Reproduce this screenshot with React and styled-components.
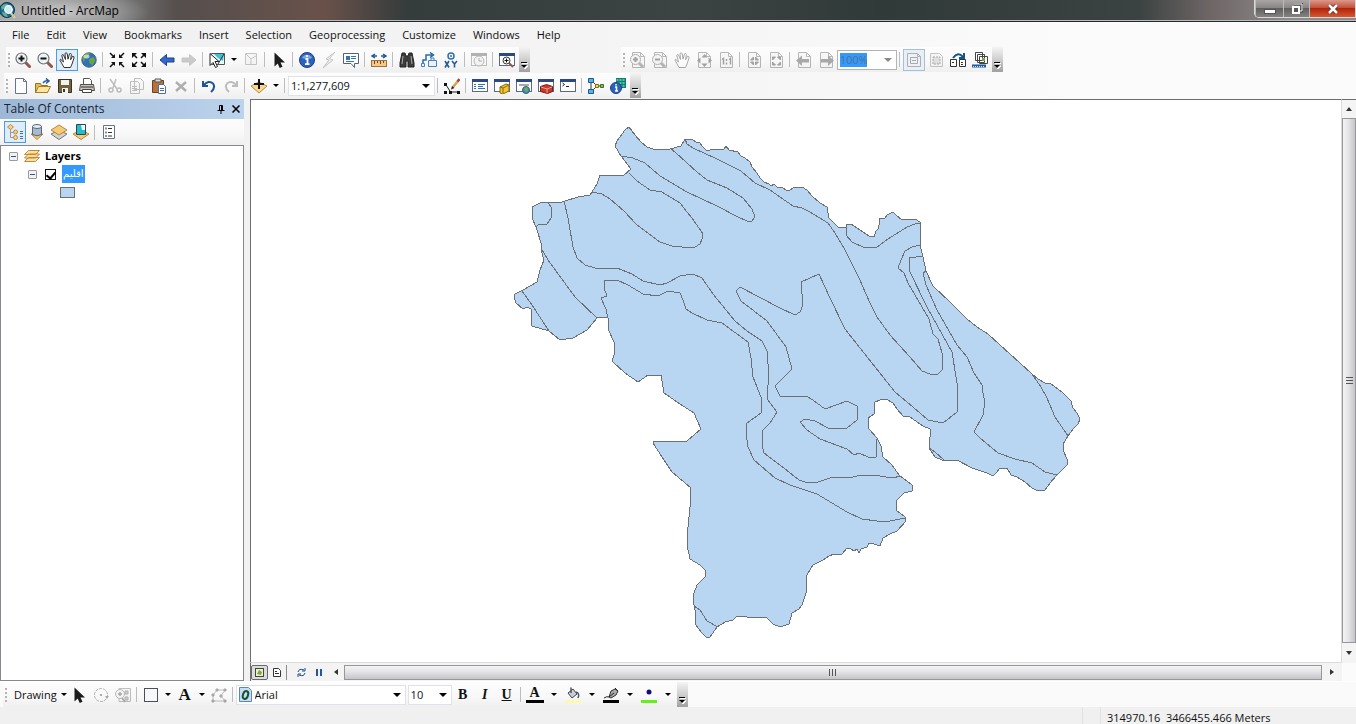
import React from "react";
import styled, { createGlobalStyle, css } from "styled-components";

const GlobalStyle = createGlobalStyle`
  * {
    box-sizing: border-box;
  }

  body {
    margin: 0;
    background: #f0f0f0;
  }

  button, select, input {
    font: inherit;
    color: inherit;
    margin: 0;
  }
`;

const Window = styled.div`
  display: flex;
  flex-direction: column;
  height: 100vh;
  overflow: hidden;
  font-family: "Open Sans", "Noto Sans", sans-serif;
  font-size: 11px;
  line-height: 16px;
  color: #111;
  background: linear-gradient(90deg, #f0f0f0, #f5f5f5 50%, #fbfbfb 80%);
`;

/* title bar */

const TitleBar = styled.header`
  display: flex;
  align-items: flex-start;
  flex: none;
  height: 22px;
  border-bottom: 1px solid #26292a;
  box-shadow: inset 0 -1px 0 #b9bcbc;
  background:
    radial-gradient(ellipse 90px 22px at 60px 12px, rgba(215, 215, 215, 0.8), rgba(215, 215, 215, 0)),
    linear-gradient(90deg, #999 0%, #777 9%, #554f4d 13%, #69514a 24%, #343c3c 30%, #3c4443 50%, #303a39 65%, #3b4342 84%, #6d6464 89%, #8e8a8a 95%);
`;

const TitleText = styled.h1`
  flex: 1;
  margin: 0;
  padding: 3px 0 0 5px;
  font-size: 12px;
  font-weight: 400;
  line-height: 16px;
  color: #000;
`;

const AppLogo = styled.div`
  display: flex;
  padding-top: 2px;
`;

const WindowButtons = styled.div`
  display: flex;
  height: 18px;
  border: 1px solid #d8d8d8;
  border-top: none;
  border-radius: 0 0 0 5px;
  overflow: hidden;
`;

const WindowButton = styled.button`
  display: flex;
  align-items: center;
  justify-content: center;
  width: ${(props) => props.$width}px;
  padding: 0;
  border: none;
  border-left: 1px solid #bbb;
  background: ${(props) =>
    props.$close
      ? "linear-gradient(#d99a8c, #c4513a 45%, #b0260c 50%, #d9552f)"
      : "linear-gradient(#aaa6a6, #8a8686 45%, #625f5f 50%, #858282)"};
`;

/* menu */

const MenuBar = styled.nav`
  display: flex;
  align-items: center;
  flex: none;
  gap: 1px;
  height: 25px;
  padding-left: 4px;
`;

const MenuItem = styled.button`
  padding: 0 8px;
  border: none;
  background: none;
  line-height: 20px;
`;

/* tool bars */

const BarRow = styled.div`
  display: flex;
  align-items: flex-start;
  flex: none;
  height: 26px;
  padding-left: ${(props) => props.$left}px;
  gap: 91px;
`;

const Bar = styled.div`
  display: flex;
  align-items: center;
  height: 25px;
  background: linear-gradient(#fdfdfd, #f8f8f8 60%, #efefef);
`;

const Grip = styled.span`
  width: 2px;
  height: 14px;
  margin: 0 2px;
  background: repeating-linear-gradient(#b4b4b4 0 2px, transparent 2px 4px);
`;

const Divider = styled.span`
  width: 1px;
  height: 15px;
  margin: 0 3px 0 2px;
  background: #bdbdbd;
`;

const ToolButton = styled.button`
  display: flex;
  align-items: center;
  justify-content: center;
  width: 22px;
  height: 22px;
  padding: 0;
  border: 1px solid transparent;
  background: none;

  ${(props) =>
    props.$active &&
    css`
      border-color: ${props.$off ? "#a9bfd6" : "#4b9be6"};
      background: ${props.$off ? "#e9eff6" : "#dfedfa"};
    `}

  ${(props) =>
    props.$off &&
    css`
      & > svg {
        filter: grayscale(1);
        opacity: 0.4;
      }
    `}
`;

const CaretButton = styled.button`
  display: flex;
  align-items: center;
  justify-content: center;
  width: ${(props) => props.$width || 12}px;
  height: 22px;
  padding: 0;
  border: none;
  background: none;
`;

const OverflowButton = styled.button`
  display: flex;
  align-items: flex-end;
  justify-content: center;
  width: 11px;
  height: 25px;
  margin-left: 1px;
  padding: 0 0 3px;
  border: none;
  background: linear-gradient(#f4f4f4, #cfcfcf 50%, #a0a0a0);
`;

const SelectBox = styled.div`
  display: grid;
  align-items: center;
  width: ${(props) => props.$width}px;
  height: 20px;
  border: 1px solid ${(props) => (props.$off ? "#b0b4b8" : "#dfe3e8")};
  background: #fff;

  & > * {
    grid-area: 1 / 1;
  }

  & > svg {
    justify-self: end;
    margin-right: 4px;
    pointer-events: none;
  }
`;

const Select = styled.select`
  appearance: none;
  width: 100%;
  height: 18px;
  padding: 0 0 0 ${(props) => props.$indent || 2}px;
  border: none;
  background: none;
  line-height: 16px;
  color: #111;
`;

const ZoomBox = styled(SelectBox)`
  & > select {
    width: 27px;
    height: 14px;
    margin-left: 2px;
    padding: 0;
    background: #3399ff;
    color: #52718f;
    line-height: 14px;
  }
`;

const FontBadge = styled.span`
  display: flex;
  padding-left: 2px;
  pointer-events: none;
`;

const TextButton = styled(ToolButton)`
  width: auto;
  padding-left: 4px;
  gap: 4px;
`;

/* workspace */

const Workspace = styled.main`
  display: flex;
  flex: 1;
  min-height: 0;
`;

const Contents = styled.aside`
  display: flex;
  flex-direction: column;
  flex: none;
  width: 244px;
  margin-right: 6px;
`;

const ContentsHeader = styled.div`
  display: flex;
  align-items: center;
  height: 20px;
  padding: 0 1px 0 4px;
  background: linear-gradient(90deg, #9db8d6, #bcd3ed);
`;

const ContentsTitle = styled.h2`
  flex: 1;
  margin: 0;
  font-size: 12px;
  font-weight: 400;
  color: #1a2433;
`;

const HeaderButton = styled.button`
  display: flex;
  align-items: center;
  justify-content: center;
  width: 15px;
  height: 16px;
  padding: 0;
  border: none;
  background: none;
`;

const ContentsTools = styled(Bar)`
  height: 26px;
  padding-left: 4px;
`;

const Tree = styled.ul`
  flex: 1;
  margin: 0;
  padding: 1px 0 0;
  list-style: none;
  border: 1px solid #85888c;
  background: #fff;
`;

const TreeRow = styled.li`
  display: flex;
  align-items: center;
  height: 18px;
  padding-left: ${(props) => props.$indent}px;
`;

const Toggle = styled.button`
  display: flex;
  align-items: center;
  justify-content: center;
  width: 9px;
  height: 9px;
  margin-right: ${(props) => props.$gap}px;
  padding: 0;
  border: 1px solid #9a9a9a;
  border-radius: 1px;
  background: #f2f2f2;

  &::before {
    content: "";
    width: 5px;
    height: 1px;
    background: #3c4f91;
  }
`;

const LayerGroup = styled.span`
  margin-left: 5px;
  font-weight: 700;
  color: #000;
`;

const LayerCheck = styled.input`
  appearance: none;
  display: flex;
  justify-content: center;
  width: 11px;
  height: 11px;
  border: 1px solid #111;
  background: #fff;

  &:checked::before {
    content: "";
    width: 4px;
    height: 7px;
    border: solid #000;
    border-width: 0 2px 2px 0;
    transform: rotate(40deg);
  }
`;

const LayerName = styled.label`
  height: 18px;
  margin-left: 6px;
  padding: 0 1px;
  font-family: "DejaVu Sans", sans-serif;
  font-size: 10px;
  line-height: 17px;
  color: #fff;
  background: #3399ff;
`;

const Swatch = styled.span`
  width: 15px;
  height: 11px;
  border: 1px solid #6e6e6e;
  background: #b8d5f1;
`;

const MapView = styled.section`
  display: grid;
  grid-template-columns: 1fr 14px;
  grid-template-rows: 1fr 18px;
  flex: 1;
  min-width: 0;
`;

const MapCanvas = styled.div`
  min-width: 0;
  min-height: 0;
  border: 1px solid #dcdcdc;
  border-top-color: #6d6d6d;
  border-left-color: #6d6d6d;
  background: #fff;

  & > svg {
    display: block;
    width: 100%;
    height: 100%;
  }
`;

const VerticalScroll = styled.div`
  display: flex;
  flex-direction: column;
  border-top: 1px solid #6d6d6d;
  background: #f0f0f0;
`;

const HorizontalScroll = styled.div`
  display: flex;
  align-items: center;
  border-left: 1px solid #6d6d6d;
  background: #f3f3f3;
`;

const ScrollArrow = styled.button`
  display: flex;
  align-items: center;
  justify-content: center;
  width: ${(props) => props.$width}px;
  height: ${(props) => props.$height}px;
  padding: 0;
  border: none;
  background: #f4f4f4;
`;

const Thumb = styled.div`
  display: flex;
  align-items: center;
  justify-content: center;
  flex: 1;
  border: 1px solid #979797;
  background: linear-gradient(${(props) => (props.$vertical ? "90deg" : "180deg")}, #f4f4f4, #e4e4e7 45%, #c4c4ca);
  ${(props) => !props.$vertical && "height: 15px;"}
`;

const ViewButton = styled.button`
  display: flex;
  align-items: center;
  justify-content: center;
  width: 17px;
  height: 15px;
  padding: 0;
  border: 1px solid ${(props) => (props.$active ? "#6a6a6a" : "transparent")};
  border-radius: 2px;
  background: ${(props) => (props.$active ? "#dcdcdc" : "none")};
`;

const ViewDivider = styled(Divider)`
  margin: 0 6px 0 1px;
  background: #8c8c8c;
`;

const DrawRow = styled.div`
  flex: none;
  display: flex;
  height: 26px;
  padding-left: 3px;
  border-top: 1px solid #fff;
  background: #fafafa;
`;

const FontGap = styled.span`
  width: 2px;
`;

const StatusBar = styled.footer`
  display: flex;
  justify-content: flex-end;
  flex: none;
  height: 17px;
  background: #f0f0f0;
`;

const StatusCell = styled.span`
  flex: none;
  width: ${(props) => props.$width}px;
  padding: 4px 0 0 6px;
  border-left: 1px solid #e2e2e2;
  line-height: 13px;
  white-space: pre;
`;

/* drawings shared by several icons */

const page = <path d="M2.5 0.500h8l4 4v11h-12z M10.5 0.500v4h4" fill="#f4f4f4" stroke="#555" />;

const screenFrame = (
  <>
    <rect x="0.5" y="1.5" width="15" height="12" fill="#fff" stroke="#5c6b85" />
    <path d="M0 2.500h16" stroke="#2c4a80" strokeWidth="3" />
  </>
);

const glass = (sign) => (
  <>
    <path d="M10.500 10.500l4 4" stroke="#93564a" strokeWidth="3" strokeLinecap="round" />
    <circle cx="6.500" cy="6.500" r="5.500" fill="#eef3f6" stroke="#6d7478" strokeWidth="1.200" />
    <path d={sign} stroke="#111" strokeWidth="2" />
  </>
);

const pageGlass = (sign) => (
  <>
    {page}
    <path d="M9 11l4 4" stroke="#555" strokeWidth="3" />
    <circle cx="5.500" cy="7.500" r="5" fill="#eee" stroke="#444" />
    <path d={sign} stroke="#222" strokeWidth="2" />
  </>
);

const infoBall = (
  <>
    <circle cx="8" cy="8" r="7.500" fill="#2a62bd" stroke="#1c3f86" />
    <path d="M3 6a5.500 5.500 0 0 1 10 0q-5 2-10 0" fill="#7fa7e6" />
    <path d="M8 3v2M6.500 7h2v5M6 12.200h4.500" stroke="#fff" strokeWidth="1.800" fill="none" />
  </>
);

const handPath = (
  <path
    d="M5 15.500L2 10Q0 7.500 1.500 7.200L4.500 10L2.800 3.600Q3 2 4.400 2.800L6.500 7.500L6 1.500Q7 0 8.200 1.500L9 7.200L10.500 1.800Q11.900 0.800 12.400 2.400L11.600 7.800L13.600 4.200Q15.400 4 15 6L13 12L11.500 15.500z"
    fill="#fff"
    stroke="#333"
  />
);

const inward = "M1 1l4 4M15 1l-4 4M1 15l4-4M15 15l-4-4";
const inwardHeads = "M6 2v4h-4zM10 2v4h4zM6 14v-4h-4zM10 14v-4h4z";
const outwardHeads = "M1 1h5l-5 5zM15 1h-5l5 5zM1 15h5l-5-5zM15 15h-5l5-5z";
const smallArrows = "M7.500 5v3h-3zM9.500 5v3h3zM7.500 13v-3h-3zM9.500 13v-3h3z";
const smallOut = "M4.500 5h3l-3 3zM12.500 5h-3l3 3zM4.500 13h3l-3-3zM12.500 13h-3l3-3z";
const leftArrow = "M1 8l6.500-5.500v3.500h7.500v4h-7.500v3.500z";
const rightArrow = "M15 8l-6.500-5.500v3.500h-7.500v4h7.500v3.500z";
const pointer = "M3.500 0.500v14l3.200-3 2 4.500 2.800-1.200-2-4.300h4.500z";

const drawings = {
  zoomIn: glass("M3.500 6.500h6M6.500 3.500v6"),
  zoomOut: glass("M3.500 6.500h6"),
  pan: handPath,
  globe: (
    <>
      <circle cx="8" cy="8" r="7.200" fill="#2f71bb" stroke="#47627c" />
      <path d="M2 4q4-4 7-3l-2 4-3 1-1 4q-2-2-1-6zM8 7l4-2 2.500 3-3 5.500-3-2.500z" fill="#6aa544" />
      <ellipse cx="5.500" cy="4.500" rx="3" ry="2" fill="#fff" opacity="0.600" />
    </>
  ),
  shrink: (
    <>
      <path d={inward} stroke="#111" strokeWidth="1.500" />
      <path d={inwardHeads} fill="#111" />
    </>
  ),
  grow: (
    <>
      <path d="M3 3l3 3M13 3l-3 3M3 13l3-3M13 13l-3-3" stroke="#111" strokeWidth="1.500" />
      <path d={outwardHeads} fill="#111" />
    </>
  ),
  back: <path d={leftArrow} fill="#3467c8" stroke="#1b428f" />,
  forward: <path d={rightArrow} fill="#888" stroke="#777" />,
  selectFeatures: (
    <>
      <path d="M2.500 1.500h13v11h-13z" fill="#e8fbfc" stroke="#555" />
      <path d="M5 2h10l-1 7-5-3z" fill="#3cc0d4" />
      <path d="M9 12l6-10" stroke="#333" />
      <path d="M1 1.500v12l3-3 2.500 5 2-1-2.500-5h4z" fill="#fff" stroke="#222" />
    </>
  ),
  clearSelection: (
    <path d="M2.500 1.500h11v11h-11zM3 2l5 5M13 4l-5 3v5" fill="#eee" stroke="#777" />
  ),
  pointer: <path d={pointer} fill="#1c1c1c" />,
  info: infoBall,
  bolt: <path d="M14 0L5 7l3 1-6 8L12 8 8.500 6.500z" fill="#ddd" stroke="#777" />,
  popup: (
    <>
      <path d="M0.500 1.500h15v10h-4v4l-3.500-4h-7.500z" fill="#fff" stroke="#566274" />
      <path d="M3 4h4v4H3z" fill="#3472b0" />
      <path d="M8 4.500h5M8 6.500h5M3 9.500h8" stroke="#3472b0" />
    </>
  ),
  ruler: (
    <>
      <path d="M1 4h5M10 4h5M4 2L1 4l3 2M12 2l3 2-3 2" stroke="#1d5d9c" strokeWidth="1.500" fill="none" />
      <rect x="0.500" y="8.500" width="15" height="6" fill="#f2c98a" stroke="#a4713d" />
      <path d="M3.500 9v3M6.500 9v2M9.500 9v3M12.500 9v2" stroke="#704a25" />
    </>
  ),
  binoculars: (
    <>
      <path d="M3 1h3l1 3h2l1-3h3l2 10v4h-6V9H7v6H1v-4z" fill="#3d3d3d" stroke="#222" />
      <path d="M4 4l-1 8M12 4l1 8" stroke="#aaa" />
    </>
  ),
  findRoute: (
    <>
      <path d="M2 12V8h3V3h7M9 0.500l3.500 2.500L9 5.500" stroke="#276ca6" strokeWidth="1.500" fill="none" />
      <path d="M7.500 8.500h8v6h-8zM10 8V6h3v2M0.500 11.500h3v3h-3z" fill="#e9f2fa" stroke="#4b83b4" />
    </>
  ),
  goToXY: (
    <>
      <circle cx="8" cy="4" r="3" fill="#fff" stroke="#2d70aa" strokeWidth="1.500" />
      <circle cx="8" cy="4" r="1" fill="#2d70aa" />
      <path d="M2 9l4 6.500M6 9l-4 6.500M9 9l2.500 3v3.500M14 9l-2.500 3" stroke="#235b96" strokeWidth="1.600" fill="none" />
    </>
  ),
  timeSlider: (
    <>
      {screenFrame}
      <circle cx="8" cy="9" r="5" fill="#eee" stroke="#555" />
      <path d="M8 6v3h3" stroke="#444" fill="none" />
    </>
  ),
  viewer: (
    <>
      {screenFrame}
      <path d="M10 11l4 4" stroke="#93564a" strokeWidth="2" />
      <circle cx="7.500" cy="8.500" r="3.500" fill="#fff" stroke="#333" />
      <path d="M5.500 8.500h4M7.500 6.500v4" stroke="#111" />
    </>
  ),
  pageZoomIn: pageGlass("M3 7.500h5M5.500 5v5"),
  pageZoomOut: pageGlass("M3 7.500h5"),
  pagePan: handPath,
  pageFull: (
    <>
      {page}
      <path d="M8.500 2l3 3.500h-6zM8.500 15l3-3.500h-6zM1 8.500l3.500-3v6zM16 8.500l-3.500-3v6z" fill="#222" />
    </>
  ),
  pageActual: (
    <>
      {page}
      <path d="M4 7.500l1.500-1v6M11 7.500l1.500-1v6M8.500 7v2M8.500 10.500v2" stroke="#222" strokeWidth="1.500" fill="none" />
    </>
  ),
  pageShrink: (
    <>
      {page}
      <path d={smallArrows} fill="#222" stroke="#222" />
    </>
  ),
  pageGrow: (
    <>
      {page}
      <path d={smallOut} fill="#222" stroke="#222" />
    </>
  ),
  pageBack: (
    <>
      {page}
      <path d="M0 8.500l6-5V7h7v3.500H6V14z" fill="#333" />
    </>
  ),
  pageForward: (
    <>
      {page}
      <path d="M16 8.500l-6-5V7H3v3.500h7V14z" fill="#333" />
    </>
  ),
  draftMode: (
    <>
      <path d="M1.500 1.500h10l3 3v10h-13zM11.500 1.500v3h3" fill="#f4f4f4" stroke="#555" />
      <path d="M4.500 5.500h7v6h-7zM6 8.500h4" fill="none" stroke="#444" />
    </>
  ),
  focusFrame: (
    <>
      <path d="M2.500 1.500h9l3 3v10h-12z" fill="#eee" stroke="#777" />
      <rect x="5" y="5" width="7" height="7" fill="#bbb" stroke="#333" strokeDasharray="2 1" />
    </>
  ),
  changeLayout: (
    <>
      <path d="M3 6q5-7 10-1M14 1v5H9" stroke="#17538d" strokeWidth="2" fill="none" />
      <path d="M0.500 7.500h6v7h-6zM9.500 7.500h6v7h-6zM2 10.500h2M11 10.500h2M11 12.500h2" fill="#fff" stroke="#333" />
    </>
  ),
  drivenPages: (
    <>
      <path d="M3.500 0.500h7v8h-7zM5.500 2.500h7v8h-7zM7.500 4.500h8v7h-8z" fill="#fff" stroke="#444" />
      <rect x="10" y="6" width="3" height="3" fill="#77a541" />
      <path d="M0 14h14" stroke="#225ca3" strokeWidth="3" />
      <path d="M1 14.500h12" stroke="#cfe0f4" strokeDasharray="1 1" />
    </>
  ),
  newDoc: <path d="M2.500 0.500h8l3 3v12h-11zM10.500 0.500v3h3" fill="#fbfdff" stroke="#66758c" />,
  open: (
    <>
      <path d="M0.500 14.500v-9h5l1 2h6v7z" fill="#e6bd57" stroke="#987222" />
      <path d="M0.500 14.500l3-6h12l-3 6z" fill="#ffe59b" stroke="#a67d29" />
      <path d="M8 5q2-3 5-2M11 0.500l3 2.500-3 2.500" stroke="#295f9e" strokeWidth="1.500" fill="none" />
    </>
  ),
  save: (
    <>
      <path d="M1.500 1.500h13v13h-13z" fill="#75633c" stroke="#393326" />
      <path d="M4 2h8v5H4zM5 10h6v5H5z" fill="#f2f2ef" />
      <path d="M6 11h2v3H6z" fill="#333" />
    </>
  ),
  print: (
    <>
      <path d="M4.500 0.500h6l2 2v5h-8z" fill="#fff" stroke="#555" />
      <path d="M1.500 6.500h13l1 6h-15z" fill="#c8c5b9" stroke="#4c4c4c" />
      <path d="M3.500 11.500h9v3h-9z" fill="#fff" stroke="#444" />
      <path d="M2 9h12" stroke="#333" />
    </>
  ),
  cut: (
    <>
      <path d="M3 1l7 10M9 1l-3 9" stroke="#666" strokeWidth="1.500" />
      <circle cx="4" cy="12" r="2" fill="none" stroke="#666" strokeWidth="1.500" />
      <circle cx="12" cy="12" r="2" fill="none" stroke="#666" strokeWidth="1.500" />
    </>
  ),
  copy: (
    <path
      d="M5.500 0.500h6l3 3v8h-9zM1.500 3.500h7l2 2v10h-9zM3 8.500h5M3 10.500h5M3 12.500h5"
      fill="#f4f4f4"
      stroke="#666"
    />
  ),
  paste: (
    <>
      <path d="M1.500 2.500h11v12h-11z" fill="#b8733c" stroke="#6d4121" />
      <path d="M4 1h6v3H4z" fill="#dcdcdc" stroke="#555" />
      <path d="M7.500 6.500h5l2 2v7h-7zM9 10.500h4M9 12.500h4" fill="#fff" stroke="#4f6f9a" />
    </>
  ),
  remove: <path d="M3 4l10 9M13 4L3 13" stroke="#444" strokeWidth="2.500" />,
  undo: <path d="M2 3v5h5M2.500 7.500q5-6 9.500-2 3 4-2 8.500" stroke="#1d559b" strokeWidth="2" fill="none" />,
  redo: <path d="M14 3v5H9M13.500 7.500q-5-6-9.500-2-3 4 2 8.500" stroke="#666" strokeWidth="2" fill="none" />,
  addData: (
    <>
      <path d="M0 8l8-4 8 4-8 7z" fill="#f8d98f" stroke="#b98b38" />
      <path d="M8 1v10M3 6h10" stroke="#111" strokeWidth="2" />
    </>
  ),
  editor: (
    <>
      <path d="M1.500 6l5 8h8" stroke="#222" fill="none" />
      <path d="M0 5h3v3H0zM0 13h3v3H0zM5 13h3v3H5zM13 13h3v3h-3z" fill="#111" />
      <path d="M9 9l5-6" stroke="#d8a24a" strokeWidth="2.500" />
      <path d="M13.500 3.500l2-2.500" stroke="#a24538" strokeWidth="2.500" />
      <path d="M7 11.500l1-3.500 2.500 2z" fill="#222" />
    </>
  ),
  tocWindow: (
    <>
      {screenFrame}
      <path d="M2 6.500h2M2 8.500h2M2 10.500h2M6 6.500h7M6 8.500h5M6 10.500h7" stroke="#2b76b8" />
    </>
  ),
  catalog: (
    <>
      {screenFrame}
      <path d="M6 9l6-3 3 1v6l-6 3-3-1z" fill="#f1c42c" stroke="#8a6c12" />
      <path d="M6 9l3 1 6-3M9 10v5" stroke="#8a6c12" fill="none" />
    </>
  ),
  searchWindow: (
    <>
      {screenFrame}
      <path d="M3 7h10" stroke="#aaa" strokeWidth="2" />
      <circle cx="10" cy="12" r="3.500" fill="#3d8fc2" stroke="#3d586d" />
      <path d="M8 10l3-1 1 3-2 2z" fill="#74b24b" />
    </>
  ),
  toolbox: (
    <>
      {screenFrame}
      <path d="M2.500 8.500l6-2 6 2v5l-5 2-7-2z" fill="#c43a2c" stroke="#7c1d17" />
      <path d="M3 9l6 2 5-2M9 11v4" stroke="#f0a090" fill="none" />
    </>
  ),
  python: (
    <>
      {screenFrame}
      <path d="M2.500 5l2 1.500-2 1.500M6 8.500h3" stroke="#222" fill="none" />
    </>
  ),
  model: (
    <>
      <path d="M3 3v10M4 3l5 5h4M4 13l5-5" stroke="#333" fill="none" />
      <path d="M0.500 0.500h5v4h-5zM0.500 11.500h5v4h-5z" fill="#55b5ea" stroke="#185c92" />
      <path d="M7.500 6.500h3v3h-3z" fill="#ffd84a" stroke="#896b12" />
      <path d="M12.500 6.500h3v3h-3z" fill="#7bc264" stroke="#337522" />
    </>
  ),
  infoGrid: (
    <>
      <path d="M6 0h10v10H6z" fill="#157b6b" />
      <path d="M7.500 1v8M10.500 1v8M13.500 1v8" stroke="#45c9aa" strokeWidth="2" strokeDasharray="2 1" />
      <circle cx="6" cy="10" r="5.500" fill="#2a62bd" stroke="#1c3f86" />
      <path d="M6 6v1.500M5 9h1.500v4M5 13h3" stroke="#fff" strokeWidth="1.500" fill="none" />
    </>
  ),
  listOrder: (
    <>
      <path d="M3.500 5v8.500h5M3.500 8.500h5" stroke="#999" fill="none" />
      <g fill="#f6d08a" stroke="#bb8b3e">
        <path d="M3.500 0.500l3 2.500-3 2.500-3-2.500z" />
        <circle cx="8.500" cy="8" r="2" />
        <circle cx="8.500" cy="13.500" r="2" />
      </g>
      <path d="M13 7.500h3M13 9.500h3M13 12.500h3M13 14.500h3" stroke="#446f9e" />
    </>
  ),
  listSource: (
    <>
      <path d="M2 10l6 5.500 6-5.500z" fill="#f3c66b" stroke="#bb8b3e" />
      <path d="M3.500 2.500v8q4.500 2.500 9 0v-8z" fill="#a9b9d0" stroke="#59677e" />
      <ellipse cx="8" cy="2.500" rx="4.500" ry="2" fill="#e6ecf4" stroke="#59677e" />
    </>
  ),
  listVisible: (
    <>
      <path d="M0 10l8-4 8 4-8 5.500z" fill="#d2d2d2" stroke="#777" />
      <path d="M0 6l8-5 8 5-8 5z" fill="#f7cb75" stroke="#b5873c" />
    </>
  ),
  listSelection: (
    <>
      <path d="M0 10l8-4 8 4-8 5.500z" fill="#f7cb75" stroke="#b5873c" />
      <path d="M3.500 0.500h9v10h-9z" fill="#25bccc" stroke="#34434f" />
      <path d="M8 1h4v5H9z" fill="#e6fbfd" />
    </>
  ),
  options: (
    <>
      <path d="M2.500 1.500h11v13h-11z" fill="#fff" stroke="#67758c" />
      <path d="M7 4.500h4M7 8.500h4M7 12h4" stroke="#333" />
      <path d="M4.500 4.500h1M4.500 8.500h1M4.500 12h1" stroke="#222" strokeWidth="2" />
    </>
  ),
  layers: (
    <path
      d="M0.500 13.500l4-4h11l-4 4zM0.500 10l4-4h11l-4 4zM0.500 6.500l4-4h11l-4 4z"
      fill="#fbe0a2"
      stroke="#c08a38"
    />
  ),
  rotate: (
    <>
      <circle cx="8" cy="8" r="6.500" fill="none" stroke="#444" strokeDasharray="3 1" />
      <path d="M7 7h2v2H7zM12 9h4l-2 3z" fill="#333" />
    </>
  ),
  zoomSelected: (
    <>
      <path d="M4 1.500h11.500v13H4z" fill="#eee" stroke="#666" />
      <path d="M10 4h3v3h-3zM10 10h3v3h-3z" fill="#999" stroke="#444" />
      <circle cx="5" cy="7" r="4.500" fill="#eee" stroke="#555" />
      <path d="M3 7h4M5 5v4M7 11l3 4" stroke="#333" strokeWidth="1.500" />
    </>
  ),
  rectangle: <rect x="1.500" y="1.500" width="13" height="13" fill="#f6f7fa" stroke="#4a4f5a" />,
  editVertices: (
    <>
      <path d="M2 14V8l4-5h8l-4 6 4 5z" stroke="#666" fill="none" />
      <path d="M1 7h2v2H1zM5 2h2v2H5zM13 2h2v2h-2zM9 8h2v2H9zM13 13h2v2h-2zM1 13h2v2H1z" fill="#333" stroke="#333" />
    </>
  ),
  bucket: (
    <>
      <path d="M3 6l5-4 4 5-5 4z" fill="#c9ced6" stroke="#444" />
      <path d="M6 6V0.500M11 5q4 1 2 6" stroke="#4b5868" strokeWidth="1.500" fill="none" />
      <path d="M0 13h17v3H0z" fill="#fbfbb0" />
    </>
  ),
  pen: (
    <>
      <path d="M6 10l2-6 4-2 3 2-2 4-5 3z" fill="#a9a9a9" stroke="#333" />
      <path d="M6 10l5-4M1 11q3-2 5-1M12 1l3 3" stroke="#222" fill="none" />
      <path d="M0 13h17v3H0z" fill="#000" />
    </>
  ),
  marker: (
    <>
      <circle cx="8" cy="5" r="2.500" fill="#10107a" />
      <path d="M0 13h17v3H0z" fill="#66f01a" />
    </>
  ),
};

const Drawing = ({ name, size = 16 }) => (
  <svg width={size} height={size} viewBox="0 0 16 16" fill="none" aria-hidden="true">
    {drawings[name]}
  </svg>
);

const Caret = ({ color = "#000" }) => (
  <svg width="8" height="4" viewBox="0 0 8 4" aria-hidden="true">
    <path d="M0 0h8L4 4z" fill={color} />
  </svg>
);

const SmallCaret = () => (
  <svg width="6" height="3" viewBox="0 0 6 3" aria-hidden="true">
    <path d="M0 0h6L3 3z" fill="#000" />
  </svg>
);

const Overflow = () => (
  <OverflowButton aria-label="Toolbar options">
    <svg width="7" height="7" viewBox="0 0 7 7" aria-hidden="true">
      <path d="M1 1.500h6M1 4h6L4 7z" fill="#fff" stroke="#fff" />
      <path d="M0 0.500h6" stroke="#000" />
      <path d="M0 3h6L3 6z" fill="#000" />
    </svg>
  </OverflowButton>
);

const GlyphText = styled.span`
  font-family: "Liberation Serif", serif;
  font-size: ${(props) => props.$size || 14}px;
  line-height: 16px;
  font-weight: 700;
  font-style: ${(props) => (props.$italic ? "italic" : "normal")};
  text-decoration: ${(props) => (props.$underline ? "underline" : "none")};
`;

const FontColor = styled(GlyphText)`
  width: 18px;
  height: 16px;
  line-height: 12px;
  border-bottom: 3px solid #000;
`;

// "|" is a divider, a name ending with "-" is disabled
const Tools = ({ items, active, carets = [], caretWidth }) =>
  items.map((item, index) => {
    if (item === "|") {
      return <Divider key={index} />;
    }
    const name = item.replace("-", "");
    return (
      <React.Fragment key={name}>
        <ToolButton aria-label={name} $active={name === active} $off={item !== name}>
          <Drawing name={name} />
        </ToolButton>
        {carets.includes(name) && (
          <CaretButton aria-label={name + " menu"} $width={caretWidth}>
            <SmallCaret />
          </CaretButton>
        )}
      </React.Fragment>
    );
  });

const menus = [
  "File",
  "Edit",
  "View",
  "Bookmarks",
  "Insert",
  "Selection",
  "Geoprocessing",
  "Customize",
  "Windows",
  "Help",
];

const navigationTools = [
  "zoomIn", "zoomOut", "pan", "globe", "|", "shrink", "grow", "|", "back", "forward-", "|",
  "selectFeatures", "clearSelection-", "|", "pointer", "|", "info", "bolt-", "popup", "|",
  "ruler", "|", "binoculars", "findRoute", "goToXY", "|", "timeSlider-", "|", "viewer",
];

const layoutTools = [
  "pageZoomIn-", "pageZoomOut-", "pagePan-", "pageFull-", "pageActual-", "|",
  "pageShrink-", "pageGrow-", "|", "pageBack-", "pageForward-",
];

const fileTools = [
  "newDoc", "open", "save", "print", "|", "cut-", "copy-", "paste", "remove-", "|",
  "undo", "redo-", "|", "addData", "|",
];

const windowTools = [
  "|", "editor", "|", "tocWindow", "catalog", "searchWindow", "toolbox", "python", "|",
  "model", "infoGrid",
];

const outline =
  "629,127 635,135 641,142 647,147 653,149 670,149 681,146 685,139 692,139 696,142 700,143 702,146 707,151 713,149 724,149 726,146 729,150 738,152 741,156 745,158 750,162 752,167 757,173 760,178 764,182 769,184 771,186 774,184 777,187 781,187 788,191 795,187 802,187 807,190 812,196 820,203 827,207 829,218 838,227 846,227 846,225 851,224 860,230 869,236 874,237 876,231 878,229 880,221 879,219 885,218 887,215 893,212 897,216 901,219 915,219 920,222 920,245 923,257 926,271 933,286 950,302 967,319 977,327 988,334 1000,345 1020,363 1032,374 1038,379 1045,383 1051,384 1062,392 1071,401 1073,408 1077,413 1080,419 1078,424 1073,429 1068,436 1063,444 1063,450 1067,459 1067,465 1057,475 1050,483 1045,490 1038,491 1032,488 1025,482 1017,477 1011,475 1007,468 1000,468 996,473 993,476 987,473 972,468 957,460 942,460 935,457 929,448 929,443 930,437 930,429 923,426 910,417 903,416 897,409 893,403 886,399 880,400 875,402 874,414 868,418 869,429 877,438 881,446 883,457 892,465 899,475 912,485 912,491 904,493 897,500 896,510 905,517 906,521 897,531 890,534 883,538 880,546 874,544 869,543 867,547 861,549 859,553 857,549 854,551 851,549 847,548 842,554 834,554 829,556 823,560 813,565 807,575 806,593 802,605 799,609 792,613 789,624 780,627 773,624 766,617 747,617 737,616 733,620 725,622 717,627 710,637 706,637 702,633 695,624 696,615 694,605 693,603 694,593 697,585 706,576 705,570 700,565 690,559 687,545 688,527 690,507 691,488 672,472 662,457 653,443 654,441 682,442 687,441 701,429 694,413 680,404 664,393 661,375 648,375 638,382 625,373 613,362 612,360 615,353 614,342 608,329 608,318 600,317 597,318 587,330 573,338 560,340 549,331 532,326 531,309 527,307 523,309 516,303 514,297 515,294 523,290 537,282 540,270 544,260 541,250 542,246 536,227 532,218 532,207 542,202 562,202 578,197 590,195 597,184 600,175 623,176 631,169 621,156 615,146 617,141 625,130";

const zones = [
  "621,156 633,158 645,163 660,176 687,192 717,206 738,217 747,221 752,221 755,217 752,209 743,198 727,188 707,180 697,172 687,163 675,152 671,149",
  "629,173 637,181 650,190 662,192 680,203 687,212 692,218 703,234 702,239 700,244 695,247 682,247 672,246 660,242 637,225 624,211 610,199 602,194 592,192",
  "685,139 687,144 693,148 717,159 741,171 755,183 770,190 780,197 793,206 802,208 810,212 828,223 835,233 845,250 859,278 870,303 877,317 890,335 910,357 922,371 930,374 938,374 942,370 943,363 942,353 938,339 933,334 929,319 922,307 915,295 908,283 904,273 898,268 901,260 905,251 912,247 920,245",
  "548,202 552,209 551,218 547,224 538,225 536,227",
  "564,201 568,218 573,247 577,258 585,265 595,268 617,268 632,274 643,281 660,285 667,283 680,276 693,274 702,278 713,294 735,321 747,331 762,341 767,351 769,377 767,393 768,400 777,412 770,423 762,431 762,445 764,453 780,465 799,480 805,482 818,482 833,477 848,478 862,475 880,476 892,478 901,476",
  "541,248 548,260 575,297 597,318",
  "522,291 532,305 549,331",
  "608,318 606,309 601,298 607,296 604,288 605,280 617,280 628,285 643,294 658,296 668,291 680,293 683,300 686,309 692,313 707,320 722,323 748,342 751,358 753,377 757,387 762,400 761,413 747,423 746,433 748,447 754,460 775,478 790,485 817,494 847,512 862,519 877,521 890,521 905,518",
  "877,439 876,457 868,457 859,453 854,455 847,449 820,439 807,430 800,422 805,419 815,421 828,428 847,428 857,420 857,406 847,401 825,409 813,400 806,396 780,396 775,386 792,369 786,347 767,321 741,301 736,291 740,287 780,308 795,315 800,312 803,305 801,282 819,274 830,298 845,329 860,348 895,392 913,407 928,420 943,423 957,412 957,383 952,352 927,307 909,270 909,258 923,256",
  "846,227 846,235 852,242 865,248 877,247 888,239 907,227 915,224 920,223",
  "926,271 923,273 926,285 937,310 957,345 967,357 974,373 982,385 983,393 985,402 983,415 974,432 980,438 998,453 1015,459 1032,463 1045,472 1057,475",
  "1032,374 1041,387 1047,398 1055,417 1068,436",
  "929,448 935,452 944,460",
  "694,606 700,610 707,621 718,627",
];

const RegionMap = () => (
  <svg viewBox="251 100 1090 562" role="img" aria-label="Climate regions">
    <g shapeRendering="crispEdges" stroke="#6a7076" strokeWidth="1">
      <polygon points={outline} fill="#b8d5f1" />
      {zones.map((points) => (
        <polyline key={points} points={points} fill="none" />
      ))}
    </g>
  </svg>
);

const Logo = () => (
  <svg width="16" height="17" viewBox="0 0 16 17" aria-hidden="true">
    <circle cx="7" cy="8" r="7.500" fill="#1b6c86" stroke="#0b3548" />
    <path d="M1 5q3-4 7-3l-2 3-4 3zM2 10l4 1 2 4q-5 0-6-5z" fill="#64b09a" />
    <path d="M10 10l5 6" stroke="#d9c9a0" strokeWidth="2" />
    <circle cx="8.500" cy="7.500" r="3.800" fill="#cdeaf5" stroke="#fff" strokeWidth="1.200" />
  </svg>
);

export default function App() {
  const [layerOn, setLayerOn] = React.useState(true);

  return (
    <Window>
      <GlobalStyle />
      <TitleBar>
        <AppLogo>
          <Logo />
        </AppLogo>
        <TitleText>Untitled - ArcMap</TitleText>
        <WindowButtons>
          <WindowButton $width={28} aria-label="Minimize">
            <svg width="12" height="12" viewBox="0 0 12 12">
              <rect x="0.500" y="6.500" width="11" height="4" fill="#fff" stroke="#555" />
            </svg>
          </WindowButton>
          <WindowButton $width={26} aria-label="Restore">
            <svg width="12" height="12" viewBox="0 0 12 12">
              <path d="M3 1h8v7H9" fill="none" stroke="#444" strokeWidth="3" />
              <path d="M3 1h8v7H9" fill="none" stroke="#fff" />
              <rect x="2" y="4" width="6" height="6" fill="#555" stroke="#fff" strokeWidth="2" />
            </svg>
          </WindowButton>
          <WindowButton $width={46} $close aria-label="Close">
            <svg width="12" height="10" viewBox="0 0 12 10">
              <path d="M2 1l8 8M10 1L2 9" stroke="#5b2a26" strokeWidth="4" />
              <path d="M2 1l8 8M10 1L2 9" stroke="#fff" strokeWidth="2.500" />
            </svg>
          </WindowButton>
        </WindowButtons>
      </TitleBar>

      <MenuBar>
        {menus.map((menu) => (
          <MenuItem key={menu}>{menu}</MenuItem>
        ))}
      </MenuBar>

      <BarRow $left={6}>
        <Bar>
          <Grip />
          <Tools items={navigationTools} active="pan" carets={["selectFeatures"]} />
          <Overflow />
        </Bar>
        <Bar>
          <Grip />
          <Tools items={layoutTools} />
          <ZoomBox $width={60} $off>
            <Select aria-label="Page zoom" defaultValue="100%">
              <option>100%</option>
            </Select>
            <Caret color="#888" />
          </ZoomBox>
          <Divider />
          <Tools items={["draftMode-", "focusFrame-", "changeLayout", "drivenPages"]} active="draftMode" />
          <Overflow />
        </Bar>
      </BarRow>

      <BarRow $left={4}>
        <Bar>
          <Grip />
          <Tools items={fileTools} carets={["addData"]} />
          <SelectBox $width={147}>
            <Select aria-label="Map scale" defaultValue="1:1,277,609">
              <option>1:1,277,609</option>
            </Select>
            <Caret />
          </SelectBox>
          <Tools items={windowTools} />
          <Overflow />
        </Bar>
      </BarRow>

      <Workspace>
        <Contents>
          <ContentsHeader>
            <ContentsTitle>Table Of Contents</ContentsTitle>
            <HeaderButton aria-label="Auto hide">
              <svg width="8" height="9" viewBox="0 0 8 9">
                <path d="M2.500 5V0.500h3V5M4.500 1v4M0.500 5.500h7M4 6v3" fill="none" stroke="#000" />
              </svg>
            </HeaderButton>
            <HeaderButton aria-label="Close panel">
              <svg width="8" height="8" viewBox="0 0 8 8">
                <path d="M0.500 0.500l7 7M7.500 0.500l-7 7" stroke="#000" strokeWidth="1.500" />
              </svg>
            </HeaderButton>
          </ContentsHeader>
          <ContentsTools>
            <Tools
              items={["listOrder", "listSource", "listVisible", "listSelection", "|", "options"]}
              active="listOrder"
            />
          </ContentsTools>
          <Tree>
            <TreeRow $indent={8}>
              <Toggle $gap={6} aria-label="Collapse Layers" />
              <Drawing name="layers" />
              <LayerGroup>Layers</LayerGroup>
            </TreeRow>
            <TreeRow $indent={27}>
              <Toggle $gap={8} aria-label="Collapse layer" />
              <LayerCheck
                type="checkbox"
                id="layer"
                checked={layerOn}
                onChange={() => setLayerOn(!layerOn)}
              />
              <LayerName htmlFor="layer">اقليم</LayerName>
            </TreeRow>
            <TreeRow $indent={59}>
              <Swatch />
            </TreeRow>
          </Tree>
        </Contents>

        <MapView>
          <MapCanvas>{layerOn && <RegionMap />}</MapCanvas>
          <VerticalScroll>
            <ScrollArrow $width={14} $height={18} aria-label="Scroll up">
              <svg width="6" height="4" viewBox="0 0 6 4">
                <path d="M0 4h6L3 0z" fill="#333" />
              </svg>
            </ScrollArrow>
            <Thumb $vertical>
              <svg width="7" height="7" viewBox="0 0 7 7">
                <path d="M0 0.500h7M0 3.500h7M0 6.500h7" stroke="#555" />
              </svg>
            </Thumb>
            <ScrollArrow $width={14} $height={20} aria-label="Scroll down">
              <svg width="6" height="4" viewBox="0 0 6 4">
                <path d="M0 0h6L3 4z" fill="#333" />
              </svg>
            </ScrollArrow>
          </VerticalScroll>
          <HorizontalScroll>
            <ViewButton $active aria-label="Data view">
              <svg width="9" height="9" viewBox="0 0 9 9">
                <rect x="0.500" y="0.500" width="8" height="8" fill="#e9f2c6" stroke="#444" />
                <path d="M2 6l2-4 3 2-1 3z" fill="#7fa34a" />
              </svg>
            </ViewButton>
            <ViewButton aria-label="Layout view">
              <svg width="8" height="9" viewBox="0 0 8 9">
                <path d="M0.500 0.500h5l2 2v6h-7zM2 3.500h2M2 5.500h4" fill="#fff" stroke="#333" />
              </svg>
            </ViewButton>
            <ViewDivider />
            <ViewButton aria-label="Refresh">
              <svg width="9" height="9" viewBox="0 0 9 9">
                <path d="M1 4q1-4 6-2M8 5q-1 4-6 2M8 0v3H5M1 9V6h3" fill="none" stroke="#1d4c86" />
              </svg>
            </ViewButton>
            <ViewButton aria-label="Pause drawing">
              <svg width="6" height="7" viewBox="0 0 6 7">
                <path d="M1 0v7M5 0v7" stroke="#2456a0" strokeWidth="2" />
              </svg>
            </ViewButton>
            <ScrollArrow $width={17} $height={15} aria-label="Scroll left">
              <svg width="4" height="6" viewBox="0 0 4 6">
                <path d="M4 0v6L0 3z" fill="#333" />
              </svg>
            </ScrollArrow>
            <Thumb>
              <svg width="8" height="7" viewBox="0 0 8 7">
                <path d="M0.500 0v7M3.500 0v7M6.500 0v7" stroke="#555" />
              </svg>
            </Thumb>
            <ScrollArrow $width={20} $height={15} aria-label="Scroll right">
              <svg width="4" height="6" viewBox="0 0 4 6">
                <path d="M0 0v6L4 3z" fill="#333" />
              </svg>
            </ScrollArrow>
          </HorizontalScroll>
        </MapView>
      </Workspace>

      <DrawRow>
        <Bar>
          <Grip />
          <TextButton>
            Drawing
            <SmallCaret />
          </TextButton>
          <Tools
            items={["pointer", "rotate-", "zoomSelected-", "|", "rectangle"]}
            carets={["rectangle"]}
          />
          <ToolButton aria-label="Text">
            <GlyphText $size={17}>A</GlyphText>
          </ToolButton>
          <CaretButton aria-label="Text menu">
            <SmallCaret />
          </CaretButton>
          <Tools items={["editVertices-", "|"]} />
          <SelectBox $width={170}>
            <FontBadge>
              <svg width="13" height="15" viewBox="0 0 13 15">
                <path d="M0.500 0.500h9l3 3v11h-12z" fill="#c9ddf5" stroke="#5b86bd" />
                <ellipse cx="6.500" cy="8" rx="2.500" ry="4" fill="none" stroke="#14562d" strokeWidth="2" transform="rotate(20 6.500 8)" />
              </svg>
            </FontBadge>
            <Select aria-label="Font" $indent={18} defaultValue="Arial">
              <option>Arial</option>
            </Select>
            <Caret />
          </SelectBox>
          <FontGap />
          <SelectBox $width={44}>
            <Select aria-label="Font size" defaultValue="10">
              <option>10</option>
            </Select>
            <Caret />
          </SelectBox>
          <ToolButton aria-label="Bold">
            <GlyphText>B</GlyphText>
          </ToolButton>
          <ToolButton aria-label="Italic">
            <GlyphText $italic>I</GlyphText>
          </ToolButton>
          <ToolButton aria-label="Underline">
            <GlyphText $underline>U</GlyphText>
          </ToolButton>
          <Divider />
          <ToolButton aria-label="Font color">
            <FontColor>A</FontColor>
          </ToolButton>
          <CaretButton aria-label="Font color menu" $width={16}>
            <SmallCaret />
          </CaretButton>
          <Tools
            items={["bucket", "pen", "marker"]}
            carets={["bucket", "pen", "marker"]}
            caretWidth={16}
          />
          <Overflow />
        </Bar>
      </DrawRow>

      <StatusBar>
        <StatusCell $width={18} />
        <StatusCell $width={256}>{"314970.16  3466455.466 Meters"}</StatusCell>
      </StatusBar>
    </Window>
  );
}
